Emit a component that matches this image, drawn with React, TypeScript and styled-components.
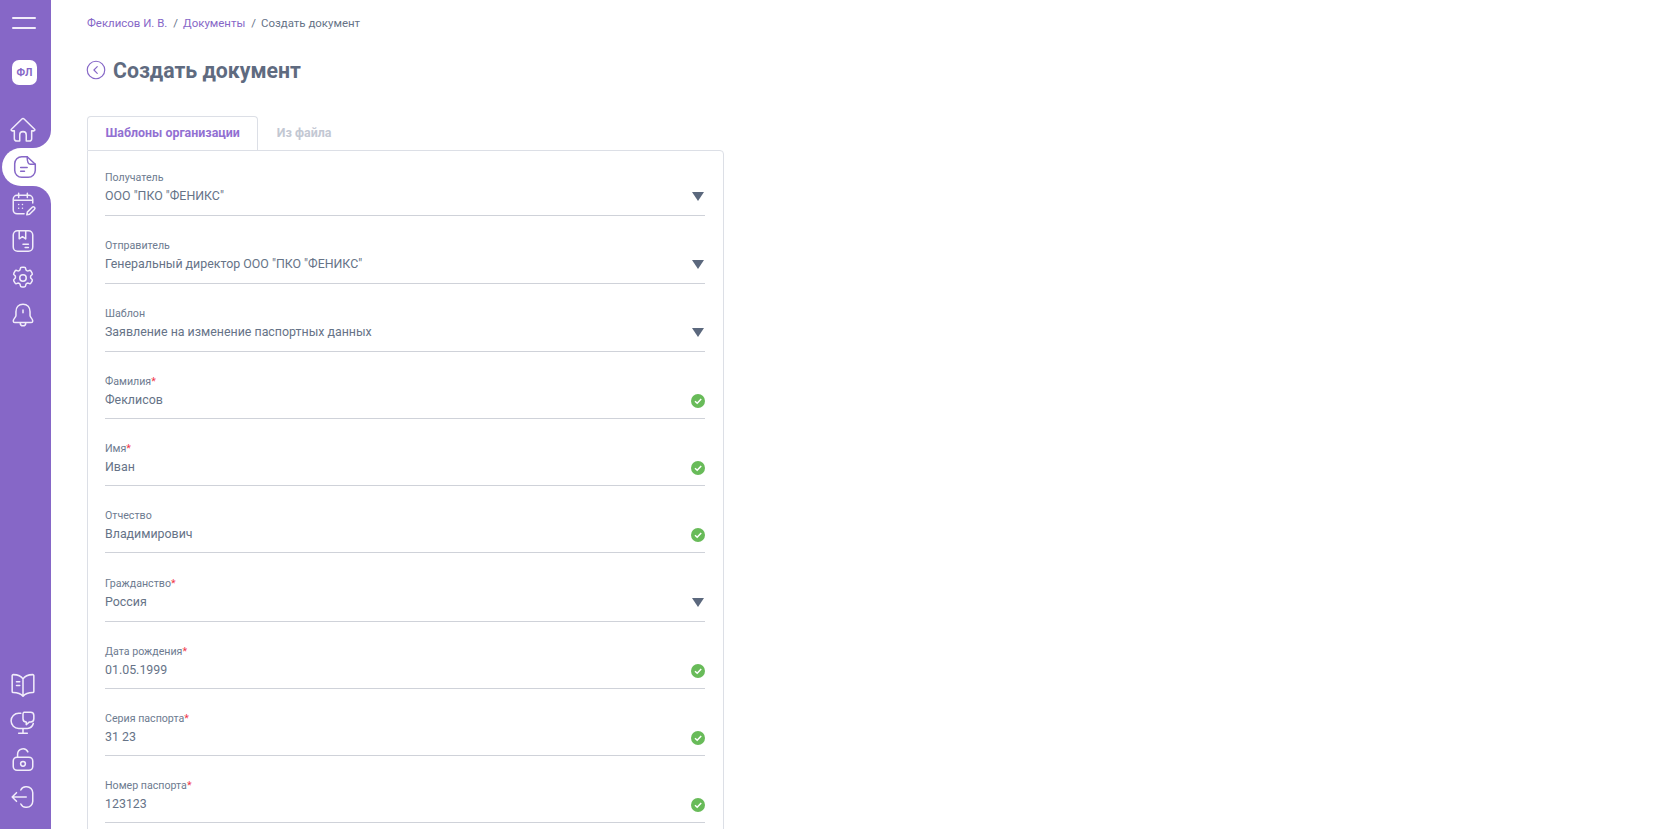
import React from "react";
import styled, { createGlobalStyle } from "styled-components";

const Global = createGlobalStyle`
  html, body { margin: 0; padding: 0; height: 100%; overflow: hidden; background: #fff; }
  body { font-family: Roboto, "Noto Sans", sans-serif; color: #667387; }
  #root { height: 100%; }
`;

const Page = styled.div`
  display: flex;
  height: 829px;
  overflow: hidden;
`;

const Sidebar = styled.nav`
  width: 51px;
  flex: none;
  background: #8667c7;
  display: flex;
  flex-direction: column;
  align-items: stretch;
  height: 100%;
`;

const Burger = styled.button`
  height: 23px;
  margin-top: 17px;
  padding: 0 0 0 12px;
  border: 0;
  background: none;
  display: flex;
  flex-direction: column;
  align-items: flex-start;
  gap: 8px;
  & > span { display: block; width: 24px; height: 2px; background: #f1ecfa; border-radius: 1px; }
`;

const Avatar = styled.div`
  width: 25px;
  height: 25px;
  margin: 20px 0 0 12px;
  border-radius: 7px;
  background: #fff;
  color: #8667c7;
  font-size: 10.5px;
  font-weight: 700;
  display: flex;
  align-items: center;
  justify-content: center;
`;

const NavList = styled.div`
  margin-top: 26px;
  display: flex;
  flex-direction: column;
`;

const NavItem = styled.div<{ $active?: boolean }>`
  position: relative;
  height: 37px;
  display: flex;
  align-items: center;
  justify-content: flex-start;
  padding-left: 10px;
  color: ${(p) => (p.$active ? "#8667c7" : "#f1ecfa")};
  ${(p) =>
    p.$active &&
    `
    background: #fff;
    margin-left: 2px;
    padding-left: 10px;
    height: 38px;
    margin-bottom: -1px;
    border-radius: 19px 0 0 19px;
    &::before, &::after {
      content: "";
      position: absolute;
      right: 0;
      width: 18px;
      height: 18px;
      background: transparent;
      clip-path: inset(0);
    }
    &::before { top: -18px; border-bottom-right-radius: 18px; box-shadow: 6px 6px 0 6px #fff; }
    &::after { bottom: -18px; border-top-right-radius: 18px; box-shadow: 6px -6px 0 6px #fff; }
  `}
  svg { width: 26px; height: 26px; display: block; }
`;

const BottomList = styled(NavList)`
  margin-top: auto;
  margin-bottom: 14px;
`;

const Main = styled.main`
  flex: 1;
  min-width: 0;
  padding: 16px 0 0 36px;
`;

const Breadcrumbs = styled.div`
  display: flex;
  font-size: 11.45px;
  line-height: 15px;
  color: #667387;
`;

const Crumb = styled.span`
  color: #8667c7;
`;

const Sep = styled.span`
  margin: 0 5px 0 6px;
`;

const TitleRow = styled.div`
  display: flex;
  align-items: center;
  margin-top: 26px;
  gap: 7px;
  svg { width: 20px; height: 20px; margin: -2px 0 0 -1px; color: #8667c7; display: block; }
`;

const Title = styled.h1`
  margin: 0;
  font-size: 21.25px;
  line-height: 28px;
  font-weight: 700;
  color: #5f6b80;
`;

const Tabs = styled.div`
  display: flex;
  margin-top: 31px;
  width: 637px;
  position: relative;
  z-index: 1;
`;

const Tab = styled.div<{ $active?: boolean }>`
  height: 34px;
  box-sizing: border-box;
  padding: 0 17.5px 3px;
  display: flex;
  align-items: center;
  font-size: 12.4px;
  font-weight: 700;
  color: ${(p) => (p.$active ? "#9270d2" : "#c3c8d3")};
  border: 1px solid ${(p) => (p.$active ? "#dcdfe6" : "transparent")};
  border-bottom: 0;
  border-radius: 4px 4px 0 0;
  background: ${(p) => (p.$active ? "#fff" : "transparent")};
  margin-bottom: ${(p) => (p.$active ? "-1px" : "0")};
`;

const Card = styled.section`
  width: 637px;
  box-sizing: border-box;
  border: 1px solid #dcdfe6;
  border-radius: 0 4px 0 0;
  padding: 20px 18px 40px 17px;
`;

const Field = styled.div<{ $select?: boolean }>`
  height: ${(p) => (p.$select ? "67.9px" : "67.35px")};
`;

const Label = styled.div`
  font-size: 10.65px;
  line-height: 14px;
  color: #6d7b90;
`;

const Required = styled.span`
  color: #f0364a;
`;

const ValueRow = styled.div<{ $select?: boolean }>`
  display: flex;
  align-items: flex-start;
  justify-content: space-between;
  height: ${(p) => (p.$select ? "31px" : "30px")};
  box-sizing: border-box;
  border-bottom: 1px solid #cfd2d9;
  font-size: 12.4px;
  line-height: 22px;
  color: #667387;
`;

const Arrow = styled.span`
  width: 0;
  height: 0;
  margin: 7px 1px 0 0;
  border-left: 6px solid transparent;
  border-right: 6px solid transparent;
  border-top: 9px solid #5b687d;
`;

const Check = styled.svg`
  width: 14px;
  height: 14px;
  margin-top: 5px;
  display: block;
`;

const icon = { viewBox: "0 0 24 24", fill: "none", stroke: "currentColor", strokeWidth: 1.4, strokeLinecap: "round", strokeLinejoin: "round" } as const;

const Home = () => (<svg {...icon}><path d="M11 1.800 1.300 11.300a.9.900 0 0 0 .6 1.500H4v7.200A2.200 2.200 0 0 0 6.200 22.200H9v-5.700a3 3 0 0 1 6 0v5.700h2.800a2.200 2.200 0 0 0 2.200-2.200v-7.200h2.100a.9.900 0 0 0 .6-1.500L13 1.800a1.400 1.400 0 0 0-2 0z" /></svg>);
const Doc = () => (<svg {...icon}><path d="M14 2.500H9a6.500 6.500 0 0 0-6.500 6.500v6A6.500 6.500 0 0 0 9 21.500h6a6.500 6.500 0 0 0 6.500-6.500v-5.500z" /><path d="M14 2.500c0 3 0 7 3 7h4.500M8 12.500h6M8 16h3.500" /></svg>);
const Calendar = () => (<svg {...icon}><path d="M21 11V7.500a3.500 3.500 0 0 0-3.500-3.500h-11A3.500 3.500 0 0 0 3 7.500v10A3.500 3.500 0 0 0 6.500 21H13M3 8.500h18M8 2v4M16 2v4M8 12.500h.01M11.500 12.500h.01M8 16h.01M11.500 16h.01" /><path d="m15.500 22 .5-2.500 4.500-4.500a1.400 1.400 0 0 1 2 2L18 21.500z" /></svg>);
const Book = () => (<svg {...icon}><rect x="3" y="2.500" width="18" height="19" rx="4" /><path d="M8.500 2.500v7.500l3-2 3 2V2.500M12 15h5M14 18h3" /></svg>);
const Gear = () => (<svg {...icon}><circle cx="12" cy="12" r="3" /><path d="M9.500 3.500a1.500 1.500 0 0 1 1.500-1.500h2a1.500 1.500 0 0 1 1.500 1.500c0 1.500 1.600 2.400 2.900 1.700a1.500 1.500 0 0 1 2 .5l1 1.700a1.500 1.500 0 0 1-.5 2c-1.300.8-1.300 2.600 0 3.400a1.500 1.500 0 0 1 .5 2l-1 1.700a1.500 1.500 0 0 1-2 .5c-1.300-.7-2.900.2-2.900 1.700a1.500 1.500 0 0 1-1.500 1.500h-2a1.500 1.500 0 0 1-1.500-1.500c0-1.500-1.600-2.400-2.900-1.700a1.500 1.500 0 0 1-2-.5l-1-1.700a1.500 1.500 0 0 1 .5-2c1.300-.8 1.300-2.600 0-3.400a1.500 1.500 0 0 1-.5-2l1-1.700a1.500 1.500 0 0 1 2-.5c1.300.7 2.900-.2 2.900-1.700z" /></svg>);
const Bell = () => (<svg {...icon}><path d="M12 2c-4 0-6.500 3-6.500 7v3.500c0 1.500-2.500 3-2.500 5 0 .8.500 1.500 1.500 1.500h15c1 0 1.500-.7 1.500-1.500 0-2-2.500-3.500-2.500-5V9c0-4-2.500-7-6.500-7zM9.500 19.500c0 1.500 1 2.500 2.500 2.500s2.500-1 2.500-2.500M12 7.500V10" /></svg>);
const Open = () => (<svg {...icon}><path d="M12 5.500C10.500 3 7 1.500 3 1.500a1 1 0 0 0-1 1V17a1 1 0 0 0 1 1c4 0 7 1 9 3.500 2-2.500 5-3.500 9-3.500a1 1 0 0 0 1-1V2.500a1 1 0 0 0-1-1c-4 0-7.500 1.500-9 4zM12 5.500v16M6 8h3M6 11.500h3" /></svg>);
const Screen = () => (<svg {...icon}><path d="M10 3H8a6.500 6.500 0 0 0 0 14h8a6 6 0 0 0 5.500-4.500M12 17v4.500M8 21.500h8" /><path d="M13 2h6a3 3 0 0 1 3 3v3a3 3 0 0 1-3 3h-1l-3 2.500V11a3 3 0 0 1-3-3V4a2 2 0 0 1 1-2z" /></svg>);
const Lock = () => (<svg {...icon}><rect x="3" y="9.500" width="18" height="12" rx="3.500" /><path d="M7 9.500v-3a5 5 0 0 1 9.500-2" /><circle cx="12" cy="15.500" r="2.200" /></svg>);
const Exit = () => (<svg {...icon}><path d="M10 5.500A5 5 0 0 1 14.500 2.500h1A5.500 5.500 0 0 1 21 8v8a5.500 5.500 0 0 1-5.500 5.500h-1A5 5 0 0 1 10 18.500M15 12H2M6 8l-4 4 4 4" /></svg>);
const Back = () => (<svg {...icon} strokeWidth={1.4}><circle cx="12" cy="12" r="10.500" /><path d="m13.500 8-4 4 4 4" /></svg>);

const fields: { label: string; value: string; req?: boolean; select?: boolean }[] = [
  { label: "Получатель", value: 'ООО "ПКО "ФЕНИКС"', select: true },
  { label: "Отправитель", value: 'Генеральный директор ООО "ПКО "ФЕНИКС"', select: true },
  { label: "Шаблон", value: "Заявление на изменение паспортных данных", select: true },
  { label: "Фамилия", value: "Феклисов", req: true },
  { label: "Имя", value: "Иван", req: true },
  { label: "Отчество", value: "Владимирович" },
  { label: "Гражданство", value: "Россия", req: true, select: true },
  { label: "Дата рождения", value: "01.05.1999", req: true },
  { label: "Серия паспорта", value: "31 23", req: true },
  { label: "Номер паспорта", value: "123123", req: true },
];

export default function App() {
  return (
    <Page>
      <Global />
      <Sidebar>
        <Burger aria-label="menu"><span /><span /></Burger>
        <Avatar>ФЛ</Avatar>
        <NavList>
          <NavItem><Home /></NavItem>
          <NavItem $active><Doc /></NavItem>
          <NavItem><Calendar /></NavItem>
          <NavItem><Book /></NavItem>
          <NavItem><Gear /></NavItem>
          <NavItem><Bell /></NavItem>
        </NavList>
        <BottomList>
          <NavItem><Open /></NavItem>
          <NavItem><Screen /></NavItem>
          <NavItem><Lock /></NavItem>
          <NavItem><Exit /></NavItem>
        </BottomList>
      </Sidebar>
      <Main>
        <Breadcrumbs>
          <Crumb>Феклисов И. В.</Crumb><Sep>/</Sep><Crumb>Документы</Crumb><Sep>/</Sep><span>Создать документ</span>
        </Breadcrumbs>
        <TitleRow><Back /><Title>Создать документ</Title></TitleRow>
        <Tabs>
          <Tab $active>Шаблоны организации</Tab>
          <Tab>Из файла</Tab>
        </Tabs>
        <Card>
          {fields.map((f) => (
            <Field key={f.label} $select={f.select}>
              <Label>{f.label}{f.req && <Required>*</Required>}</Label>
              <ValueRow $select={f.select}>
                <span>{f.value}</span>
                {f.select ? <Arrow /> : (
                  <Check viewBox="0 0 14 14">
                    <circle cx="7" cy="7" r="7" fill="#68bb59" />
                    <path d="m4 7.200 2.200 2.100L10.200 5" fill="none" stroke="#fff" strokeWidth="1.500" />
                  </Check>
                )}
              </ValueRow>
            </Field>
          ))}
        </Card>
      </Main>
    </Page>
  );
}
